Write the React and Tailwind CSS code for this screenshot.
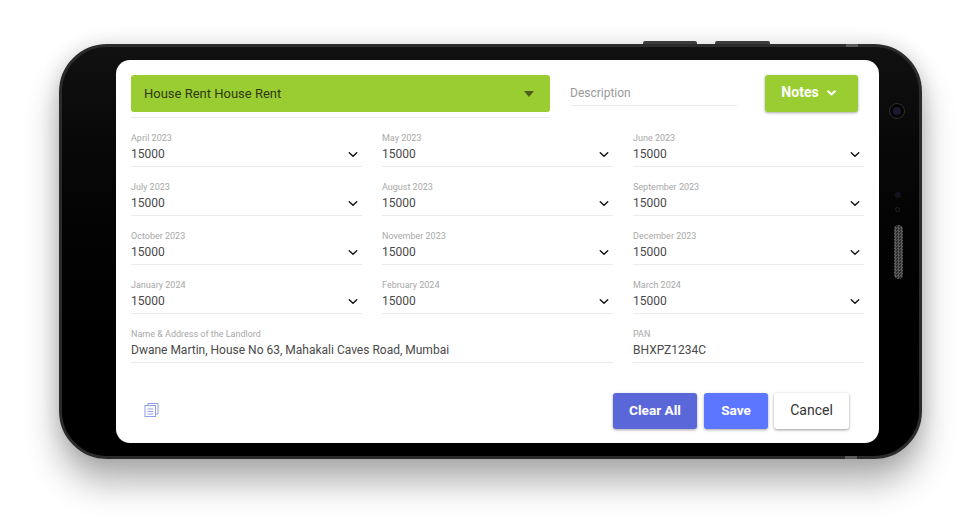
import React from "react";

const months = [
  "April 2023", "May 2023", "June 2023",
  "July 2023", "August 2023", "September 2023",
  "October 2023", "November 2023", "December 2023",
  "January 2024", "February 2024", "March 2024",
];

const Chevron = ({ className, width = 1.7 }) => (
  <svg viewBox="0 0 12 8" className={className} fill="none" stroke="currentColor" strokeWidth={width} strokeLinecap="round" strokeLinejoin="round">
    <path d="M1.5 1.8 6 6l4.5-4.2" />
  </svg>
);

const MonthField = ({ label }) => (
  <div className="h-[49px] pt-[14px]">
    <div className="h-[35px] border-b border-[#e9ebf0]">
      <div className="text-[9px] leading-[13px] h-[11px] text-[#a8a8a8]">{label}</div>
      <div className="flex items-center justify-between h-[21px] pr-[4px] text-[12px] text-[#4a4a4a]">
        <span>15000</span>
        <Chevron className="w-[10px] h-[7px] mt-[2px] text-[#111]" />
      </div>
    </div>
  </div>
);

const TextField = ({ label, value }) => (
  <div className="h-[35px] border-b border-[#e9ebf0]">
    <div className="text-[9px] leading-[13px] h-[11px] text-[#a8a8a8]">{label}</div>
    <div className="h-[22px] leading-[23px] text-[12px] text-[#4a4a4a]">{value}</div>
  </div>
);

export default function App() {
  return (
    <div className="w-[980px] h-[525px] bg-white overflow-hidden pl-[59px] pt-[44px] font-['Roboto',sans-serif]">
      <div className="relative w-[863px] h-[415px] rounded-[48px] bg-gradient-to-b from-[#111] to-black border-[3px] border-[#2b2b2b] shadow-[0_24px_34px_rgba(0,0,0,0.3),0_0_20px_rgba(0,0,0,0.14)] pl-[54px] pt-[13px]">
        {/* side buttons on top edge */}
        <div className="absolute top-[-6px] left-[581px] w-[54px] h-[3px] rounded-t-[2px] bg-[#3c3c3c]" />
        <div className="absolute top-[-6px] left-[653px] w-[55px] h-[3px] rounded-t-[2px] bg-[#3c3c3c]" />
        {/* antenna bands */}
        <div className="absolute top-[-3px] left-[784px] w-[12px] h-[3px] bg-[#5a5a5a]" />
        <div className="absolute bottom-[-3px] left-[783px] w-[12px] h-[3px] bg-[#5a5a5a]" />
        {/* camera */}
        <div className="absolute left-[827px] top-[56px] w-[16px] h-[16px] rounded-full bg-[#050505] border border-[#2e2e2e] flex items-center justify-center">
          <div className="w-[8px] h-[8px] rounded-full bg-[#1d1830]" />
        </div>
        {/* sensors */}
        <div className="absolute left-[833px] top-[145px] w-[6px] h-[6px] rounded-full bg-[#14121f]" />
        <div className="absolute left-[833px] top-[160px] w-[5px] h-[5px] rounded-full bg-[#030303] border border-[#222]" />
        {/* speaker */}
        <div className="absolute left-[832px] top-[178px] w-[9px] h-[54px] rounded-full bg-[repeating-conic-gradient(#5a5a5a_0_25%,#2a2a2a_0_50%)] bg-[length:3px_3px]" />

        <div className="w-[763px] h-[383px] rounded-[14px] bg-white px-[15px] pt-[15px]">
          <div className="flex h-[43px]">
            <div className="w-[419px] h-[43px] border-b border-[#e9ebf0]">
              <div className="h-[37px] rounded-[3px] bg-[#9acd32] flex items-center justify-between pl-[13px] pr-[16px] text-[13px] text-[#2f3a12]">
                <span>House Rent House Rent</span>
                <span className="w-0 h-0 border-x-[5.5px] border-x-transparent border-t-[6px] border-t-[#4d5f1c]" />
              </div>
            </div>
            <div className="ml-[20px] w-[167px] h-[31px] border-b border-[#e9ebf0] text-[12px] text-[#9a9a9a] leading-[36px]">
              Description
            </div>
            <button className="ml-[28px] w-[93px] h-[37px] rounded-[3px] bg-[#9acd32] text-white text-[14px] font-bold shadow-[0_1px_3px_rgba(0,0,0,0.35)] flex items-center justify-center gap-[8px] pb-[2px] pr-[6px]">
              Notes
              <Chevron className="w-[9px] h-[6px]" width={2.8} />
            </button>
          </div>

          <div className="grid grid-cols-[231px_231px_231px] gap-x-[20px]">
            {months.map((m) => (
              <MonthField key={m} label={m} />
            ))}
          </div>

          <div className="grid grid-cols-[482px_231px] gap-x-[20px] mt-[14px]">
            <TextField label="Name & Address of the Landlord" value="Dwane Martin, House No 63, Mahakali Caves Road, Mumbai" />
            <TextField label="PAN" value="BHXPZ1234C" />
          </div>

          <div className="flex items-start mt-[30px]">
            <svg viewBox="0 0 14 14" className="w-[15px] h-[14px] ml-[13px] mt-[10px] text-[#8f9de8]" fill="none" stroke="currentColor" strokeWidth="1">
              <path d="M3.5 2.5V.5h10v10.5h-2.5" />
              <rect x="0.5" y="2.5" width="10.5" height="11" />
              <path d="M3 6h5.5M3 8.5h5.5M3 11h5.5" />
            </svg>
            <div className="ml-auto flex mr-[15px]">
              <button className="w-[84px] h-[36px] rounded-[3px] bg-[#5a67d8] text-white text-[13.6px] font-bold pb-[2px] shadow-[0_1px_3px_rgba(0,0,0,0.35)]">Clear All</button>
              <button className="ml-[7px] w-[64px] h-[36px] rounded-[3px] bg-[#5c76ff] text-white text-[13.6px] font-bold pb-[2px] shadow-[0_1px_3px_rgba(0,0,0,0.35)]">Save</button>
              <button className="ml-[6px] w-[75px] h-[36px] rounded-[3px] bg-white text-[#333] text-[14px] pb-[2px] shadow-[0_1px_3px_rgba(0,0,0,0.4)]">Cancel</button>
            </div>
          </div>
        </div>
      </div>
    </div>
  );
}
